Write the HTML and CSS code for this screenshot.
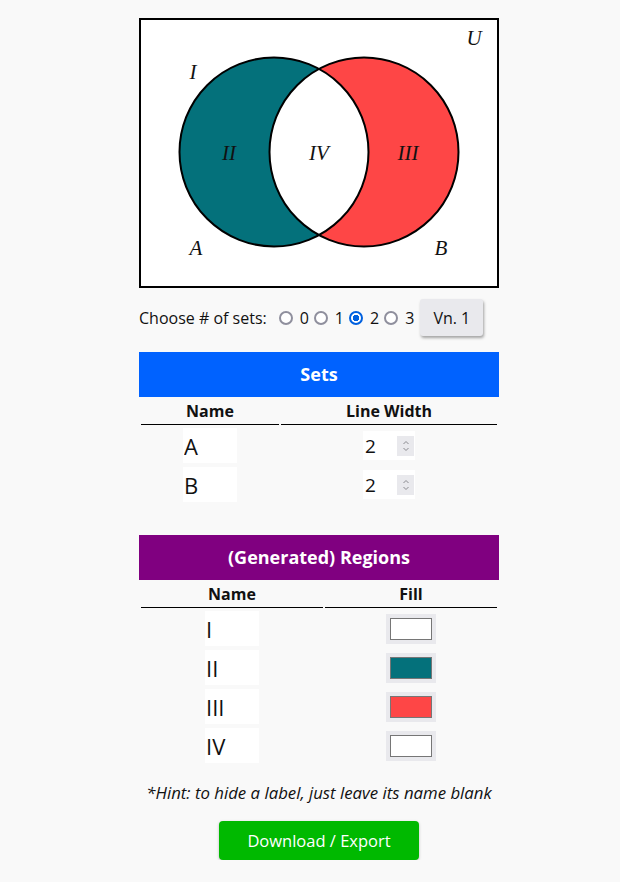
FILE: index.html
```html
<!DOCTYPE html>
<html>
<head>
<meta charset="utf-8">
<link rel="stylesheet" href="styles.css">
</head>
<body>
<div class="app">
  <svg class="venn" width="360" height="270" viewBox="0 0 360 270">
    <defs>
      <clipPath id="clipA"><circle cx="135" cy="134" r="94.5"/></clipPath>
    </defs>
    <rect x="1" y="1" width="358" height="268" fill="#fff" stroke="#000" stroke-width="2"/>
    <circle cx="135" cy="134" r="94.5" fill="#04717b"/>
    <circle cx="225" cy="134" r="94.5" fill="#fe4646"/>
    <circle cx="225" cy="134" r="94.5" fill="#fff" clip-path="url(#clipA)"/>
    <circle cx="135" cy="134" r="94.5" fill="none" stroke="#000" stroke-width="2"/>
    <circle cx="225" cy="134" r="94.5" fill="none" stroke="#000" stroke-width="2"/>
    <g class="lbl">
      <text x="335" y="27">U</text>
      <text x="54" y="61">I</text>
      <text x="90" y="142">II</text>
      <text x="180" y="142">IV</text>
      <text x="269" y="142">III</text>
      <text x="57" y="237">A</text>
      <text x="302" y="237">B</text>
    </g>
  </svg>

  <div class="choose">
    <span class="choose-label">Choose # of sets:</span>
    <label class="opt"><input type="radio" name="n">0</label>
    <label class="opt"><input type="radio" name="n">1</label>
    <label class="opt"><input type="radio" name="n" checked>2</label>
    <label class="opt"><input type="radio" name="n">3</label>
    <button class="vn">Vn. 1</button>
  </div>

  <div class="bar bar-sets">Sets</div>
  <table class="tbl tbl-sets">
    <thead><tr><th class="c1">Name</th><th>Line Width</th></tr></thead>
    <tbody>
      <tr><td><input class="name" type="text" value="A"></td><td><span class="num"><span class="nv">2</span><span class="spin"><svg width="10" height="16" viewBox="0 0 10 16"><path d="M2.5 6 L5 3.5 L7.5 6 M2.5 10 L5 12.5 L7.5 10" fill="none" stroke="#8a8a8f" stroke-width="1"/></svg></span></span></td></tr>
      <tr><td><input class="name" type="text" value="B"></td><td><span class="num"><span class="nv">2</span><span class="spin"><svg width="10" height="16" viewBox="0 0 10 16"><path d="M2.5 6 L5 3.5 L7.5 6 M2.5 10 L5 12.5 L7.5 10" fill="none" stroke="#8a8a8f" stroke-width="1"/></svg></span></span></td></tr>
    </tbody>
  </table>

  <div class="bar bar-regions">(Generated) Regions</div>
  <table class="tbl tbl-regions">
    <thead><tr><th class="c1">Name</th><th>Fill</th></tr></thead>
    <tbody>
      <tr><td><input class="name" type="text" value="I"></td><td><span class="color"><span class="sw sw-white"></span></span></td></tr>
      <tr><td><input class="name" type="text" value="II"></td><td><span class="color"><span class="sw sw-teal"></span></span></td></tr>
      <tr><td><input class="name" type="text" value="III"></td><td><span class="color"><span class="sw sw-red"></span></span></td></tr>
      <tr><td><input class="name" type="text" value="IV"></td><td><span class="color"><span class="sw sw-white"></span></span></td></tr>
    </tbody>
  </table>

  <p class="hint">*Hint: to hide a label, just leave its name blank</p>
  <div class="dl-wrap"><button class="dl">Download / Export</button></div>
</div>
</body>
</html>
```
FILE: styles.css
```css
html, body {
  margin: 0;
  padding: 0;
  background: #f9f9f9;
}
body {
  font-family: "Open Sans", "Noto Sans", sans-serif;
  color: #111;
  padding-left: 18px;
}
.app {
  width: 360px;
  margin: 0 auto;
  padding-top: 18px;
}
.venn {
  display: block;
}
.lbl text {
  font-family: "Liberation Serif", "DejaVu Serif", serif;
  font-style: italic;
  font-size: 21px;
  text-anchor: middle;
  fill: #111;
}
.choose {
  display: flex;
  align-items: center;
  height: 37px;
  margin-top: 11px;
  font-size: 16px;
}
.choose-label {
  margin-right: 12px;
}
.opt {
  display: flex;
  align-items: center;
}
.opt input {
  -webkit-appearance: none;
  appearance: none;
  margin: 0 7px 0 0;
  width: 14px;
  height: 14px;
  box-sizing: border-box;
  border: 2px solid #8f8f9d;
  border-radius: 50%;
  background: #fff;
}
.opt input:checked {
  border-color: #0060df;
  background: radial-gradient(circle, #0060df 0 3px, #fff 3.5px);
}
.opt + .opt input {
  margin-left: 5px;
}
.vn {
  margin-left: 6px;
  width: 63px;
  height: 37px;
  border: none;
  border-radius: 3px;
  background: #e9e9ed;
  font-family: "Open Sans", sans-serif;
  font-size: 16px;
  color: #111;
  box-shadow: 1px 2px 3px rgba(0,0,0,0.35);
}
.bar {
  color: #fff;
  font-weight: bold;
  font-size: 18px;
  text-align: center;
  height: 45px;
  line-height: 45px;
}
.bar-sets {
  background: #0062ff;
  margin-top: 16px;
}
.bar-regions {
  background: #800080;
  margin-top: 30px;
}
.tbl {
  width: 360px;
  border-collapse: separate;
  border-spacing: 2px;
}
.tbl th {
  font-size: 16px;
  font-weight: bold;
  border-bottom: 1px solid #000;
  height: 24px;
  padding: 0;
  line-height: 25px;
}
.tbl-sets .c1 { width: 138px; }
.tbl-regions .c1 { width: 182px; }
.tbl td {
  text-align: center;
  padding: 0;
  height: 37px;
}
.name {
  display: block;
  margin: 0 auto;
  width: 54px;
  height: 35px;
  box-sizing: border-box;
  border: none;
  outline: none;
  background: #fff;
  padding: 0 1px;
  font-family: "Open Sans", sans-serif;
  font-size: 22px;
  color: #111;
}
.num {
  display: inline-flex;
  align-items: center;
  justify-content: space-between;
  width: 52px;
  height: 29px;
  box-sizing: border-box;
  background: #fff;
  padding: 0 1px 0 2px;
  font-size: 19px;
  vertical-align: middle;
  text-align: left;
}
.spin {
  width: 17px;
  height: 20px;
  background: #e9e9ed;
  display: flex;
  align-items: center;
  justify-content: center;
}
.color {
  display: inline-block;
  width: 50px;
  height: 30px;
  box-sizing: border-box;
  padding: 4px;
  background: #e9e9ed;
  vertical-align: middle;
}
.sw {
  display: block;
  width: 100%;
  height: 100%;
  box-sizing: border-box;
  border: 1px solid #767676;
}
.sw-white { background: #fff; }
.sw-teal { background: #04717b; }
.sw-red { background: #fe4646; }
.hint {
  text-align: center;
  font-style: italic;
  font-size: 16.8px;
  line-height: 23px;
  margin: 15px 0 0;
  white-space: nowrap;
}
.dl-wrap {
  text-align: center;
  margin-top: 17px;
}
.dl {
  width: 200px;
  height: 39px;
  border: none;
  border-radius: 4px;
  background: #00b900;
  color: #fff;
  font-family: "Open Sans", sans-serif;
  font-size: 16.5px;
  box-shadow: 0 1px 3px rgba(0,0,0,0.25);
}
```
